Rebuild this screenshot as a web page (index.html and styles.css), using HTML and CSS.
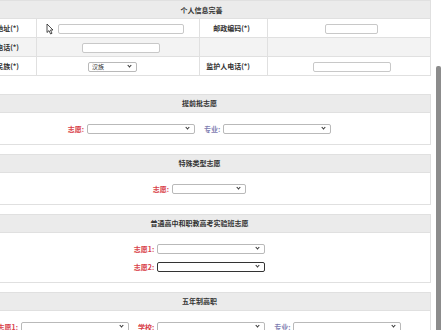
FILE: index.html
```html
<!DOCTYPE html>
<html lang="zh-CN">
<head>
    <meta charset="UTF-8">
    <meta name="viewport" content="width=device-width, initial-scale=1.0">
    <title>志愿填报</title>
    <link rel="stylesheet" href="styles.css">
</head>
<body>

    <div class="page">
        <table class="info-table">
            <colgroup>
                <col class="col-label">
                <col class="col-value">
                <col class="col-label">
                <col class="col-value">
            </colgroup>
            <tr>
                <th colspan="4" class="info-head">个人信息完善</th>
            </tr>
            <tr>
                <td class="label">地址(*)</td>
                <td class="value"><input type="text" class="field field-wide"></td>
                <td class="label">邮政编码(*)</td>
                <td class="value"><input type="text" class="field field-short"></td>
            </tr>
            <tr class="row-alt">
                <td class="label">电话(*)</td>
                <td class="value"><input type="text" class="field field-mid"></td>
                <td class="label"></td>
                <td class="value"></td>
            </tr>
            <tr>
                <td class="label">民族(*)</td>
                <td class="value">
                    <span class="pick pick-nation"><select><option>汉族</option></select></span>
                </td>
                <td class="label">监护人电话(*)</td>
                <td class="value"><input type="text" class="field field-mid"></td>
            </tr>
        </table>

        <section class="box box-first">
            <div class="box-head">提前批志愿</div>
            <div class="box-body">
                <div class="pick-row">
                    <span class="tag tag-red">志愿:</span>
                    <span class="pick pick-lg"><select><option></option></select></span>
                    <span class="tag tag-blue">专业:</span>
                    <span class="pick pick-lg"><select><option></option></select></span>
                </div>
            </div>
        </section>

        <section class="box">
            <div class="box-head">特殊类型志愿</div>
            <div class="box-body">
                <div class="pick-row">
                    <span class="tag tag-red">志愿:</span>
                    <span class="pick pick-sm"><select><option></option></select></span>
                </div>
            </div>
        </section>

        <section class="box">
            <div class="box-head">普通高中和职教高考实验班志愿</div>
            <div class="box-body">
                <div class="pick-row">
                    <span class="tag tag-red">志愿1:</span>
                    <span class="pick pick-lg"><select><option></option></select></span>
                </div>
                <div class="pick-row">
                    <span class="tag tag-red">志愿2:</span>
                    <span class="pick pick-lg is-focus"><select><option></option></select></span>
                </div>
            </div>
        </section>

        <section class="box">
            <div class="box-head">五年制高职</div>
            <div class="box-body">
                <div class="pick-row">
                    <span class="tag tag-red">志愿1:</span>
                    <span class="pick pick-lg"><select><option></option></select></span>
                    <span class="tag tag-red">学校:</span>
                    <span class="pick pick-lg"><select><option></option></select></span>
                    <span class="tag tag-blue">专业:</span>
                    <span class="pick pick-lg"><select><option></option></select></span>
                </div>
            </div>
        </section>
    </div>

    <svg class="mouse" width="8" height="12" viewBox="0 0 8 12">
        <path d="M1 1 L1 9.5 L3 7.6 L4.6 11 L6 10.3 L4.5 7 L7 7 Z" fill="#fff" stroke="#222" stroke-width="0.8" stroke-linejoin="round"/>
    </svg>

    <div class="scroll-thumb"></div>

</body>
</html>
```

FILE: styles.css
```css
* {
    margin: 0;
    padding: 0;
    box-sizing: border-box;
}

html,
body {
    overflow: hidden;
    background: #fff;
}

body {
    font-family: "Noto Sans CJK SC", "Noto Sans", sans-serif;
    font-size: 7px;
    color: #333;
}

.page {
    width: 463px;
    margin-left: -32px;
}

/* 个人信息 */
.info-table {
    width: 100%;
    border-collapse: collapse;
    table-layout: fixed;
}

.col-label {
    width: 68px;
}

.col-value {
    width: 163px;
}

.info-table th,
.info-table td {
    border: 1px solid #e0e0e0;
    height: 19px;
    padding: 0;
    vertical-align: middle;
}

.info-table .info-head {
    height: 18px;
    background: #ebebeb;
    font-weight: bold;
    text-align: center;
    padding-left: 4px;
}

.info-table .label {
    text-align: right;
    padding-right: 17px;
    font-weight: bold;
    white-space: nowrap;
}

.info-table .value {
    text-align: center;
    padding-left: 5px;
}

.row-alt td {
    background: #f3f3f3;
}

.field {
    display: inline-block;
    height: 10px;
    border: 1px solid #c8c8c8;
    border-radius: 2px;
    background: #fff;
    vertical-align: middle;
}

.field-wide {
    width: 126px;
}

.field-short {
    width: 53px;
}

.field-mid {
    width: 78px;
}

/* 志愿框 */
.box {
    border: 1px solid #e0e0e0;
    margin-top: 9px;
}

.box-first {
    margin-top: 18px;
}

.box-head {
    height: 18px;
    line-height: 17px;
    background: #ebebeb;
    border-bottom: 1px solid #e0e0e0;
    text-align: center;
    font-weight: bold;
}

.box-body {
    padding: 11px 0 10px;
    display: flex;
    flex-direction: column;
    gap: 8px;
}

.pick-row {
    display: flex;
    justify-content: center;
    align-items: center;
    gap: 3px;
    height: 10px;
    line-height: 10px;
}

.pick-row .pick + .tag {
    margin-left: 6px;
}

.tag {
    font-weight: bold;
    white-space: nowrap;
}

.tag-red {
    color: #d8404a;
}

.tag-blue {
    color: #7f80b2;
}

.pick {
    position: relative;
    display: inline-block;
    height: 10px;
    vertical-align: middle;
}

.pick select {
    appearance: none;
    -webkit-appearance: none;
    display: block;
    width: 100%;
    height: 10px;
    border: 1px solid #b9b9b9;
    border-radius: 2px;
    background: #fff;
    font-family: inherit;
    font-size: 6px;
    line-height: 8px;
    padding: 0 0 0 3px;
    color: #333;
    outline: none;
}

.pick::after {
    content: "";
    position: absolute;
    right: 6px;
    top: 2px;
    width: 2px;
    height: 2px;
    border-right: 1px solid #333;
    border-bottom: 1px solid #333;
    transform: rotate(45deg);
}

.pick.is-focus select {
    border-color: #333;
}

.pick-lg {
    width: 108px;
}

.pick-sm {
    width: 74px;
}

.pick-nation {
    width: 49px;
    margin-right: 16px;
}

/* 鼠标指针与滚动条 */
.mouse {
    position: absolute;
    left: 46px;
    top: 23px;
}

.scroll-thumb {
    position: fixed;
    right: 0;
    top: 66px;
    width: 5px;
    height: 270px;
    background: #8c8c8c;
    border-radius: 2px 2px 0 0;
}
```
